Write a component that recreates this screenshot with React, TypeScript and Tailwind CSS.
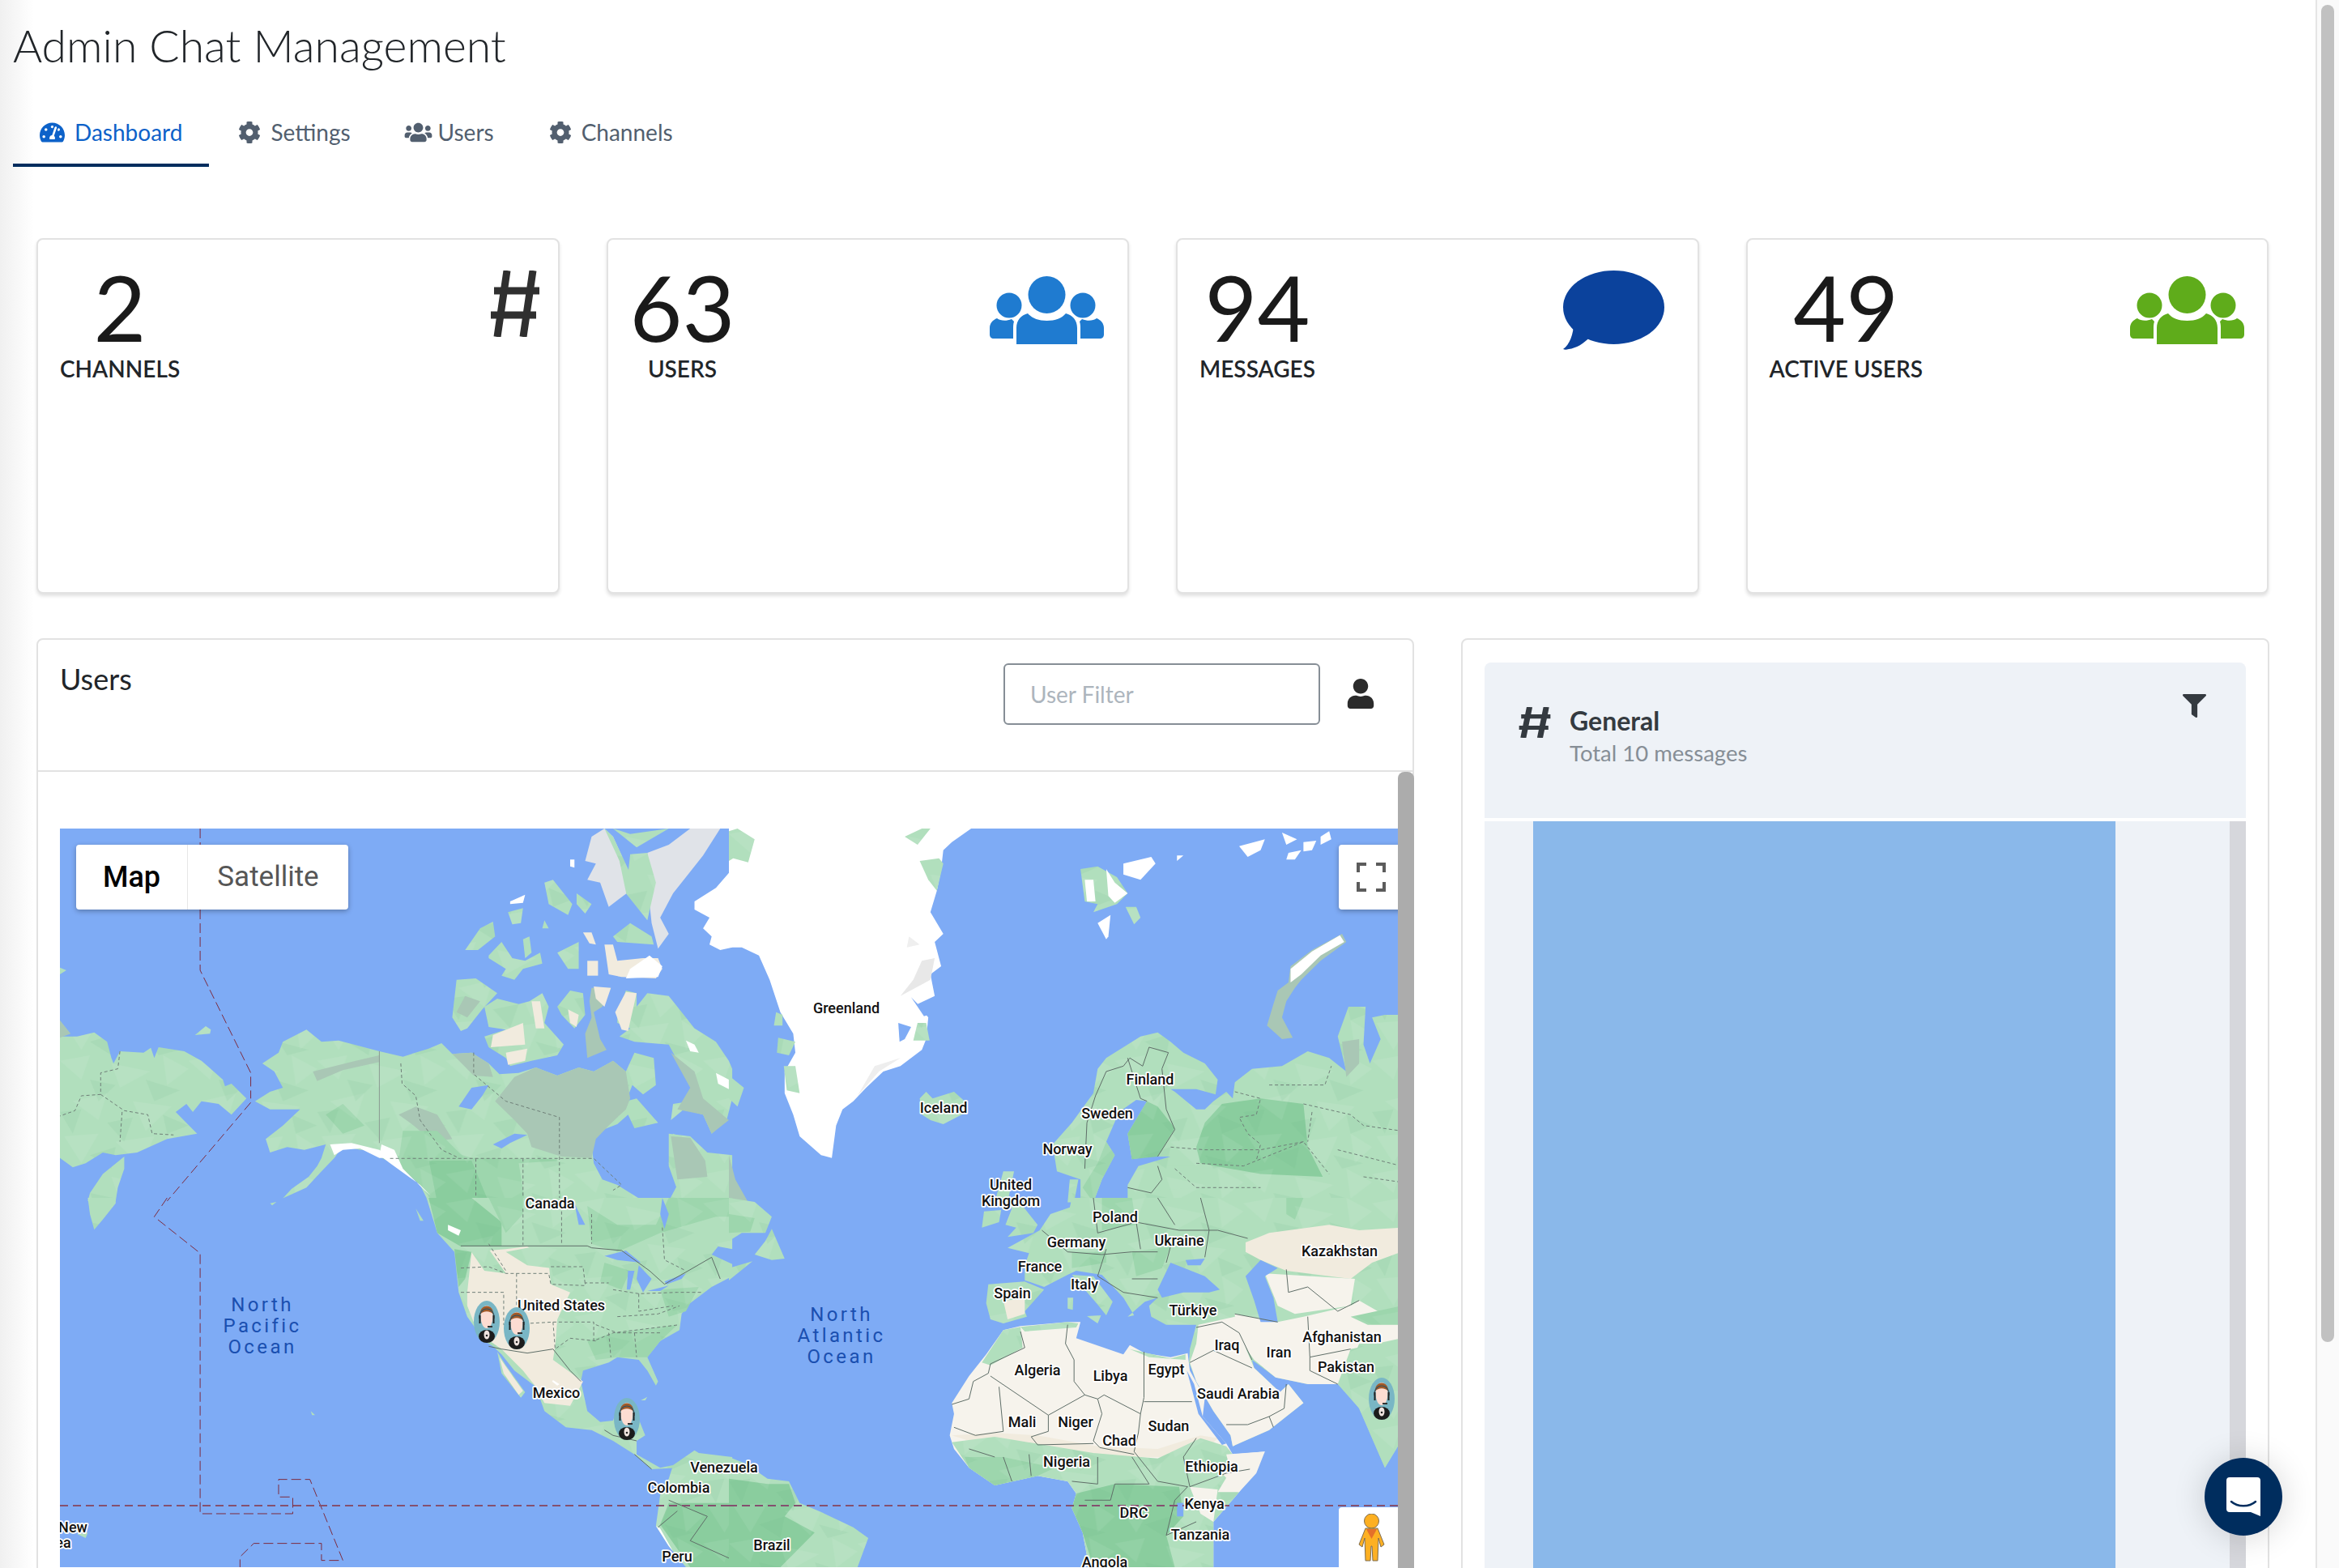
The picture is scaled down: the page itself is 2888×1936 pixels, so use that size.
import { Fragment } from 'react';
import { FaTachometerAlt, FaCog, FaUsers, FaUser, FaFilter } from 'react-icons/fa';

const LAND = '#b1dfbd';
const FOREST = '#8acd9e';
const MID = '#9dd6ad';
const TUNDRA = '#a9c7b5';
const SAND = '#f1ebde';
const DESERT = '#f6f3ec';
const SNOW = '#ffffff';
const ICE = '#e0e3e8';

// each map quadrant is traced in its own coordinates, then scaled down
const northWest: [string, string][] = [
  [LAND, '0,770 40,770 80,755 110,790 120,850 125,870 140,825 195,830 212,812 220,850 230,810 290,825 330,860 380,930 385,955 400,945 435,1000 400,1060 370,1020 330,1010 310,1050 295,1020 270,1050 320,1130 250,1150 180,1200 130,1210 100,1200 60,1240 30,1255 0,1220'],
  [LAND, '150,1215 100,1280 70,1350 65,1380 130,1380 135,1330 150,1260'],
  [LAND, '315,765 340,732 352,745 350,760'],
  [LAND, '0,515 15,525 0,540'],
  [TUNDRA, '0,710 25,760 0,775'],
  [LAND, '472,870 510,830 520,790 575,745 610,790 650,785 745,825 800,845 860,815 890,795 915,835 960,830 1000,870 1025,910 1070,905 1110,885 1160,915 1210,885 1245,900 1290,860 1320,900 1340,830 1385,850 1390,950 1360,985 1335,950 1320,1010 1345,1000 1395,1090 1340,1110 1325,1060 1300,1095 1260,1120 1240,1170 1245,1240 1265,1300 1300,1320 1350,1370 1420,1380 1440,1320 1420,1240 1430,1130 1480,1170 1520,1220 1568,1270 1568,1385 860,1385 840,1320 800,1260 770,1220 740,1190 700,1190 660,1175 640,1220 610,1270 575,1330 520,1370 540,1335 580,1290 600,1250 610,1220 620,1170 570,1190 530,1180 490,1200 480,1150 520,1100 560,1040 490,1040 455,1010 490,975 520,960 500,900'],
  [TUNDRA, '1015,1010 1060,920 1110,885 1160,915 1210,885 1245,900 1290,860 1320,900 1330,1000 1320,1040 1280,1100 1250,1150 1240,1220 1170,1215 1100,1180 1090,1130 1060,1080'],
  [TUNDRA, '790,1060 830,1030 880,1060 915,1150 870,1160 825,1100'],
  [TUNDRA, '590,900 690,860 745,840 745,865 660,895 600,935'],
  [TUNDRA, '915,835 960,830 1000,870 1010,920 965,915'],
  [MID, '750,1220 900,1190 960,1220 1160,1225 1170,1385 870,1385 840,1320 790,1250'],
  [FOREST, '860,1225 960,1230 1000,1385 880,1385'],
  [MID, '800,1120 880,1120 950,1230 790,1230'],
  [LAND, '1070,1240 1170,1230 1165,1385 1085,1385'],
  [MID, '620,1060 660,1020 710,1100 660,1130'],
  [SNOW, '630,1170 680,1165 745,1190 770,1220 745,1220 700,1185 660,1190 640,1210'],
  [SNOW, '750,1170 780,1190 800,1260 850,1340 865,1360 840,1320 770,1240 745,1210'],
  ['#7eabf5', '1010,1170 1060,1130 1090,1135 1050,1165 1030,1185'],
  ['#7eabf5', '930,1030 960,960 1000,950 985,990 960,1040'],
  [LAND, '925,560 970,555 1020,610 985,670 950,740 935,750 915,700'],
  [TUNDRA, '945,620 980,640 950,700 925,680'],
  [LAND, '990,660 1020,630 1070,650 1095,640 1125,610 1140,660 1130,720 1175,800 1160,840 1100,860 1050,880 1040,850 1000,810 990,770 1040,745 1000,735'],
  [SAND, '1010,765 1080,720 1085,800 1005,810'],
  [SAND, '1040,830 1090,815 1085,860 1045,875'],
  [SAND, '1100,640 1120,640 1130,740 1110,740'],
  [LAND, '1160,660 1190,600 1220,610 1225,690 1200,740 1170,690'],
  [SAND, '1185,670 1210,690 1205,735 1190,720'],
  [TUNDRA, '1240,590 1285,590 1265,660 1245,680 1260,780 1275,820 1230,850 1225,760 1240,700 1235,640'],
  [SAND, '1245,585 1285,590 1270,660 1250,630'],
  [LAND, '1300,690 1320,600 1345,610 1345,660 1370,610 1420,620 1440,660 1480,740 1530,790 1560,860 1568,890 1568,1000 1555,1080 1520,1130 1500,1060 1455,1040 1425,1080 1430,1020 1470,1010 1490,990 1470,920 1440,860 1420,800 1340,790 1305,770 1330,740 1300,720'],
  [SAND, '1295,680 1320,605 1345,610 1325,750 1310,745'],
  [TUNDRA, '1425,830 1480,900 1500,1000 1560,1080 1520,1130 1500,1060 1440,1040 1470,960'],
  [LAND, '1420,1130 1470,1140 1510,1200 1568,1210 1568,1385 1500,1385 1440,1340 1420,1250'],
  [TUNDRA, '1425,1140 1470,1145 1505,1230 1510,1290 1440,1300'],
  [ICE, '1240,30 1270,0 1290,30 1310,100 1330,230 1280,290 1260,200 1230,190 1250,130 1225,120'],
  [LAND, '1270,0 1290,30 1340,200 1320,235 1305,120'],
  [ICE, '1370,90 1420,60 1470,0 1540,0 1500,100 1460,180 1430,240 1400,330 1420,390 1395,445 1380,350 1370,200'],
  [LAND, '1290,0 1345,70 1420,0 1330,20'],
  [LAND, '1330,95 1370,90 1390,200 1370,340 1320,240'],
  [LAND, '1130,200 1150,190 1195,280 1185,320 1140,280'],
  [LAND, '1205,240 1240,280 1225,315 1205,280'],
  [SNOW, '1050,270 1085,245 1080,275 1050,280'],
  [LAND, '1045,310 1080,295 1075,350 1055,355'],
  [LAND, '945,450 980,370 1010,345 1015,400 975,450'],
  [LAND, '1000,470 1030,420 1055,480 1085,490 1120,460 1125,500 1080,520 1060,560 1030,545 1040,520 1000,480'],
  [LAND, '1080,410 1095,400 1100,460 1085,480'],
  [LAND, '1160,460 1210,420 1210,520 1185,520'],
  [SAND, '1230,490 1255,490 1255,545 1230,545'],
  [SAND, '1270,430 1290,430 1300,490 1360,480 1395,480 1405,520 1390,555 1310,550 1280,540'],
  [SNOW, '1330,520 1375,470 1405,510 1395,550 1320,555'],
  [SAND, '1220,385 1240,385 1250,430 1235,425'],
  [LAND, '1290,400 1330,350 1380,400 1385,430 1300,420'],
  [LAND, '1130,340 1140,370 1125,370'],
  [SNOW, '1568,150 1530,220 1480,270 1480,300 1515,330 1500,370 1520,400 1515,430 1540,450 1568,440'],
  [SNOW, '1190,115 1200,115 1200,145 1190,140'],
  [SNOW, '1460,785 1480,800 1490,830 1470,825'],
  [SNOW, '1530,905 1560,930 1560,965 1535,945'],
];

const northEast: [string, string][] = [
  [SNOW, '0,0 400,0 565,0 520,50 500,80 495,150 485,230 470,310 500,390 480,420 495,510 470,540 480,620 440,650 465,700 460,780 450,820 400,880 360,900 320,960 290,1010 265,1040 250,1100 240,1220 215,1210 165,1140 150,1060 130,980 130,900 155,830 150,760 120,680 95,560 70,470 30,440 0,440'],
  [LAND, '0,10 20,0 60,40 45,125 10,110 0,120'],
  [LAND, '410,30 450,0 470,0 440,60'],
  [LAND, '445,120 490,110 500,130 485,230 465,190'],
  [LAND, '440,720 460,720 468,785 430,785'],
  [LAND, '128,880 155,880 165,980 135,970'],
  ['#7eabf5', '395,720 425,735 410,780 398,790'],
  ['#7eabf5', '425,625 465,690 455,695'],
  [LAND, '110,680 125,690 125,730 105,730'],
  [LAND, '115,775 155,790 140,840 112,830'],
  [LAND, '0,915 35,960 20,1030 0,1000'],
  ['#efefef', '420,400 445,430 415,440'],
  ['#e8e8e8', '450,490 480,480 470,560 400,620 430,560'],
  ['#eeeeee', '340,880 400,850 350,900 300,990'],
  [LAND, '445,1000 460,975 475,1000 525,975 550,1010 555,1050 500,1095 470,1080 450,1060'],
  [LAND, '820,150 860,140 905,180 930,240 905,280 850,310 860,280 830,270'],
  [SNOW, '880,150 900,200 930,240 900,275 885,250'],
  [SNOW, '830,190 850,190 855,270 835,270'],
  [SNOW, '920,130 985,105 995,130 960,190 920,170'],
  [SNOW, '860,350 890,320 885,400 880,410'],
  [LAND, '925,290 950,290 960,330 945,355'],
  [SNOW, '1190,65 1250,40 1240,80 1210,105'],
  [SNOW, '1290,15 1325,40 1300,60'],
  [SNOW, '1340,50 1370,45 1360,80 1340,85'],
  [SNOW, '1380,30 1400,10 1405,40 1380,60'],
  [SNOW, '1305,90 1335,80 1320,115 1300,115'],
  [SNOW, '1045,100 1060,100 1045,120'],
  [TUNDRA, '1430,390 1440,420 1380,490 1335,560 1320,590 1300,640 1290,700 1315,775 1290,780 1255,730 1270,650 1280,600 1305,570 1310,510 1360,450'],
  [SNOW, '1425,395 1435,420 1380,470 1335,540 1310,570 1310,520 1360,455'],
  [LAND, '860,890 880,850 920,810 960,770 1000,755 1030,790 1060,830 1110,870 1140,930 1135,985 1090,965 1030,965 1040,975 1090,1040 1110,1040 1130,1010 1160,975 1175,1000 1180,940 1220,890 1290,880 1350,825 1400,850 1440,900 1420,770 1445,660 1485,660 1480,800 1495,870 1520,780 1500,700 1530,690 1568,690 1568,1385 930,1385 930,1320 955,1250 1030,1215 980,1215 940,1225 930,1130 975,1010 950,1005 910,1050 880,1160 900,1210 870,1300 850,1385 820,1385 820,1300 765,1270 755,1170 800,1090 850,980'],
  [FOREST, '930,1130 975,1010 1000,1030 1040,1110 1000,1215 940,1225'],
  [FOREST, '1090,1180 1110,1090 1150,1020 1240,1000 1340,1020 1350,1180 1385,1290 1240,1280 1100,1240'],
  [MID, '880,1160 900,1210 870,1300 850,1385 825,1330 860,1240'],
  [TUNDRA, '1430,790 1470,780 1470,870 1440,920'],
  [LAND, '1000,1250 1090,1250 1110,1330 990,1340'],
  [LAND, '640,1270 665,1270 650,1385 620,1385'],
  [LAND, '795,1300 815,1300 805,1385 790,1385'],
  [TUNDRA, '0,1210 15,1300 45,1385 0,1385'],
];

const southWest: [string, string][] = [
  [LAND, '65,0 130,0 130,20 100,80 80,118 70,60'],
  [LAND, '490,20 505,15 495,28'],
  [LAND, '855,0 1568,0 1568,190 1535,180 1520,210 1568,245 1568,290 1520,330 1495,360 1470,390 1450,430 1445,490 1400,530 1370,590 1395,680 1390,695 1370,640 1350,600 1300,590 1280,610 1220,640 1215,680 1230,790 1260,830 1290,825 1300,780 1340,780 1365,880 1345,900 1345,950 1400,1000 1430,990 1440,1000 1380,1005 1340,950 1290,900 1240,860 1180,850 1130,790 1110,700 1060,640 1030,580 1010,550 990,530 950,440 930,350 920,200 880,130'],
  [LAND, '1020,570 1040,620 1085,720 1075,740 1030,650'],
  [SAND, '1025,590 1040,625 1080,715 1070,730 1035,650'],
  [SAND, '950,350 960,200 1040,190 1090,180 1140,240 1145,320 1190,350 1160,450 1155,550 1150,600 1220,680 1190,770 1130,760 1110,700 1080,640 1030,560 975,500 950,400'],
  [LAND, '1040,200 1090,185 1140,180 1145,260 1090,250'],
  [LAND, '955,190 1000,190 1040,280 990,270'],
  [MID, '1230,530 1290,500 1440,470 1400,530 1370,590 1300,590 1250,600'],
  [MID, '1240,170 1300,200 1400,130 1530,70 1568,70 1568,0 1420,0 1390,100 1300,100 1230,30'],
  [FOREST, '860,0 960,0 1030,90 1030,180 935,180 880,130'],
  [MID, '1000,0 1080,0 1080,60 1040,130'],
  [FOREST, '920,190 960,200 945,300 930,330'],
  [MID, '1400,340 1490,330 1460,420 1420,440'],
  [MID, '1270,240 1330,270 1310,340 1260,310'],
  [SNOW, '905,100 935,120 930,140 905,120'],
  [SNOW, '1150,675 1165,690 1160,695 1148,680'],
  ['#7eabf5', '1270,215 1320,195 1355,240 1300,230'],
  ['#7eabf5', '1325,270 1340,270 1330,340 1322,340'],
  ['#7eabf5', '1350,250 1380,300 1360,350 1345,300'],
  ['#7eabf5', '1370,345 1420,325 1400,345'],
  ['#7eabf5', '1410,310 1460,280 1450,300 1415,320'],
  ['#7eabf5', '1200,20 1225,100 1210,100'],
  ['#7eabf5', '1405,0 1420,60 1410,115 1400,60'],
  [LAND, '830,40 848,85 840,85'],
  [LAND, '1355,750 1370,737 1365,750'],
  [LAND, '585,790 595,805 588,805'],
  [LAND, '1568,960 1490,945 1480,935 1430,990 1420,1040 1400,1100 1390,1215 1420,1290 1460,1368 1568,1368'],
  [FOREST, '1420,1130 1568,1130 1568,1368 1470,1368 1400,1210'],
  [SNOW, '1390,1215 1400,1225 1430,1310 1420,1290'],
  [LAND, '40,1245 65,1240 60,1260'],
];

const southEast: [string, string][] = [
  [LAND, '0,0 60,15 100,70 85,130 30,130 0,160'],
  [MID, '0,60 60,75 50,125 0,130'],
  [LAND, '100,115 130,225 100,230 60,210 85,160'],
  [LAND, '0,260 55,235 20,280 0,305'],
  [LAND, '0,960 40,985 90,1040 140,1050 165,1130 210,1160 290,1220 325,1260 300,1368 0,1368'],
  [FOREST, '0,1040 90,1060 140,1060 155,1130 130,1180 200,1240 120,1368 0,1368'],
  [LAND, '640,0 665,0 690,40 720,100 710,130 650,145 670,110 645,100 660,40'],
  [LAND, '595,50 635,45 630,90 590,110'],
  [LAND, '605,320 690,310 735,340 690,420 695,440 640,465 610,450 600,390'],
  [SAND, '640,380 690,375 690,430 650,450'],
  [LAND, '800,0 795,35 750,60 725,120 650,185 700,205 690,250 690,305 735,330 790,285 810,270 870,285 920,370 945,435 930,440 970,385 1000,370 980,400 985,440 1020,470 1090,470 1075,560 1073,610 1090,680 1130,790 1170,880 1175,920 1260,860 1340,760 1305,690 1285,720 1225,630 1220,600 1275,665 1350,690 1420,690 1470,780 1530,1000 1568,900 1568,0'],
  [LAND, '800,285 850,290 895,385 880,435 860,395 830,340'],
  [LAND, '790,370 803,370 802,415 790,410'],
  [LAND, '835,438 868,435 860,465'],
  [MID, '800,200 880,200 880,240 800,260'],
  [MID, '940,200 1030,180 1010,260 950,290'],
  [MID, '870,0 940,0 950,100 870,120'],
  [MID, '1300,0 1340,0 1320,80 1300,60'],
  [SAND, '1205,165 1260,130 1400,100 1470,120 1568,110 1568,200 1500,240 1450,300 1300,270 1240,230 1205,200'],
  [DESERT, '1180,430 1280,460 1340,440 1450,400 1470,380 1568,470 1568,520 1450,560 1420,690 1350,690 1275,665 1225,600 1180,500'],
  [DESERT, '1250,280 1460,300 1450,400 1320,430 1280,400'],
  [DESERT, '1095,470 1180,440 1190,500 1225,630 1285,720 1305,690 1340,760 1260,860 1175,920 1170,880 1130,790 1090,680 1075,610 1090,540'],
  [MID, '1450,440 1568,400 1568,470 1490,470'],
  [LAND, '1470,540 1568,540 1568,900 1530,1000 1470,780 1430,690'],
  ['#7eabf5', '1000,340 1030,240 1110,290 1145,340 1120,350 1060,350 1010,370'],
  ['#7eabf5', '1065,230 1110,225 1100,250 1070,250'],
  ['#7eabf5', '1205,290 1240,230 1280,260 1250,290 1270,370 1280,460 1240,460 1225,380'],
  [DESERT, '640,490 680,475 790,460 820,460 810,520 920,580 935,545 970,575 1030,590 1070,575 1075,640 1110,740 1105,810 1160,910 1175,950 1250,940 1230,1020 1190,1090 1130,1200 1130,1368 840,1368 825,1240 800,1150 810,1095 790,1050 720,1030 620,1065 560,1000 525,930 515,880 525,800 520,760 560,660 600,580'],
  [LAND, '640,490 680,478 685,555 610,620 590,610'],
  [LAND, '680,478 790,460 815,465 810,480 690,495'],
  [LAND, '935,560 1030,595 1065,580 1065,600 980,590'],
  [SAND, '520,880 620,870 720,880 860,920 1000,930 1100,880 1140,890 1100,960 900,960 600,920'],
  [LAND, '520,905 620,885 850,945 1000,965 1100,890 1160,920 1175,950 1150,1020 1190,1090 1130,1200 1130,1368 840,1368 825,1240 800,1150 810,1095 790,1050 720,1030 620,1065 560,1000'],
  [FOREST, '810,1095 900,1060 1050,1070 1060,1180 1020,1250 1040,1368 850,1368 825,1240 800,1150'],
  [MID, '550,960 640,960 760,1000 720,1030 620,1065 560,1000'],
  [DESERT, '1160,950 1250,940 1190,1090 1140,1090 1170,1010'],
  [DESERT, '1075,1070 1140,1080 1130,1200 1100,1170'],
  ['#7eabf5', '1045,1130 1060,1130 1060,1180 1045,1180'],
  ['#7eabf5', '1068,640 1085,690 1105,810 1160,910 1150,915 1095,800 1075,680'],
];

const solidLines = [
  'M680,495 690,555 610,615 605,650 570,680 560,745 520,765',
  'M790,470 785,540 805,600 805,680 830,730 745,805 610,660',
  'M830,730 860,745 875,730 960,800 968,740 968,570',
  'M860,745 870,800 850,900 865,925 945,950',
  'M968,755 1080,755',
  'M960,800 955,870 945,940 1000,1050',
  'M630,700 640,865 575,880 525,850',
  'M745,805 745,865 705,885 720,915 850,910',
  'M1000,1050 1070,1070 1040,1120 1020,1250 1090,1200',
  'M940,960 980,1060 900,1060 890,1120 830,1120',
  'M860,960 860,1060 800,1050',
  'M640,960 660,1050 M700,950 705,1030 M560,930 620,960',
  'M1090,890 1060,960 1075,1070 1160,1020 1215,1005',
  'M1090,480 1150,460 1190,500 1220,600 M1075,610 1130,565 1220,630',
  'M1160,840 1210,840 1260,810 1270,850 M1300,690 1295,780 1260,810',
  'M1300,265 1305,350 1350,330 1420,420 1470,380 M1450,560 1355,590 1355,640 1420,690',
  'M1180,430 1280,460 M1350,440 1355,590',
  'M850,0 860,130 950,90 1050,120 1140,120 1210,150 M730,120 790,200 870,210 940,200 1000,200',
  'M880,190 860,290 920,350 1000,370 M1030,180 1020,240 M950,90 960,190',
  'M940,300 1000,300 M1100,0 1120,120 1110,220 M1000,0 1040,100',
];

const usLines = [
  'M935,178 1230,178 1240,185 1310,195 1375,270 1410,320 1460,275 1520,220 1540,300',
  'M1000,550 1030,560 1090,575 1150,560 1190,640 1215,680',
  'M1345,900 1290,880 1270,860 M1380,1005 1340,950 M1420,1120 1510,1180 1470,1270 1568,1340 M1395,1220 1440,1160',
];

const stateLines = [
  'M1080,40 1080,175 M1170,50 1170,175 M1240,60 1240,170 M1405,110 1410,230 1460,270',
  'M1000,170 1040,270 M935,260 1000,255 1040,280 1140,280 1145,320 1225,325 1225,315 1280,315',
  'M935,350 1035,350 1035,470 1150,460 1245,460 1245,530 1290,500 1445,470',
  'M1065,280 1065,400 M1145,255 1220,255 1225,320 M1150,460 1155,560 1190,520 1250,530',
  'M1290,340 1350,355 1440,350 1500,350 M1350,355 1350,420 1430,400 M1300,440 1395,430 1445,400',
  'M1250,470 1300,500 1400,500 M1280,500 1285,590 M1340,500 1345,590',
];

const ruLines = [
  'M1260,950 1390,950 1405,880 M1180,975 1240,1000 1230,1060 1190,1070 1210,1130 1240,1170 1230,1230',
  'M1340,1020 1450,1060 1480,1100 1568,1120 M1340,1160 1240,1190 1110,1190 1030,1180',
  'M1090,1240 1200,1250 1340,1160 1400,1280 M1040,1260 1090,1330 1240,1330',
  'M1360,1050 1350,1160 M1420,1190 1568,1250 M1480,1290 1568,1310',
];

const ruSolid = ['M880,900 920,880 935,850 965,880 980,810 1025,830 1010,890 1020,1040 1040,1115 1000,1215', 'M880,900 855,990 835,1090 830,1260', 'M930,850 960,1000 975,1010', 'M930,1330 985,1350 1010,1300 1000,1250'];

const westRegion = [
  'M140,825 135,890 95,905 95,985 50,990 35,1045 0,1065',
  'M95,985 150,1045 205,1060 215,1130 265,1135 M145,1050 140,1160',
  'M965,830 965,910 1040,1010 1165,1070 1165,1220 1165,1380',
  'M795,870 798,945 830,990 840,1080 890,1190 930,1220',
  'M770,1222 1245,1222 1310,1320 1290,1340 M970,1222 970,1380 M1080,1222 1080,1380',
];

const greyLines = ['M745,825 745,1165'];

const labels: [string, number, number][] = [
  ['Greenland', 971, 228], ['Iceland', 1091, 351], ['Finland', 1346, 316], ['Sweden', 1293, 358], ['Norway', 1244, 402],
  ['United', 1174, 446], ['Kingdom', 1174, 466], ['Poland', 1303, 486], ['Germany', 1255, 517], ['Ukraine', 1382, 515],
  ['Kazakhstan', 1580, 528], ['France', 1210, 547], ['Italy', 1265, 569], ['Spain', 1176, 580], ['Türkiye', 1399, 601],
  ['Iraq', 1441, 644], ['Iran', 1505, 653], ['Afghanistan', 1583, 634], ['Pakistan', 1588, 671], ['Algeria', 1207, 675],
  ['Libya', 1297, 682], ['Egypt', 1366, 674], ['Saudi Arabia', 1455, 704], ['Mali', 1188, 739], ['Niger', 1254, 739],
  ['Sudan', 1369, 744], ['Chad', 1308, 762], ['Nigeria', 1243, 788], ['Ethiopia', 1422, 794], ['Kenya', 1413, 840],
  ['DRC', 1326, 851], ['Tanzania', 1408, 878], ['Angola', 1290, 912], ['Brazil', 879, 891], ['Venezuela', 820, 795],
  ['Colombia', 764, 820], ['Peru', 762, 905], ['Mexico', 613, 703], ['United States', 619, 595], ['Canada', 605, 469],
  ['New', 16, 869], ['ea', 4, 888],
];

const oceans: [string, number, number][] = [
  ['North', 250, 596], ['Pacific', 250, 622], ['Ocean', 250, 648],
  ['North', 965, 608], ['Atlantic', 965, 634], ['Ocean', 965, 660],
];

// blotchy shading that sits on top of the green land fills
const lightBlotches = ['0,20 70,0 50,90', '120,30 210,60 140,120', '240,0 300,50 250,110', '30,170 110,140 90,240', '170,170 260,190 200,280', '10,300 90,290 50,400', '130,320 220,300 190,410', '250,290 300,340 260,400'];
const darkBlotches = ['70,90 130,110 90,170', '200,90 280,130 220,170', '0,210 50,200 30,290', '110,250 170,230 150,320', '240,220 300,260 250,290', '70,370 130,340 120,420', '210,370 280,400 230,420'];

function Quadrant({ x, y, shapes, children }: { x: number; y: number; shapes: [string, string][]; children?: React.ReactNode }) {
  return (
    <g transform={`translate(${x} ${y}) scale(0.5294 0.3333)`}>
      {shapes.map(([fill, points], i) => (
        <Fragment key={i}>
          <polygon fill={fill} points={points} />
          {(fill === LAND || fill === MID || fill === FOREST) && <polygon fill="url(#mottle)" points={points} />}
        </Fragment>
      ))}
      {children}
    </g>
  );
}

function Lines({ d, stroke, width = 1, dash }: { d: string[]; stroke: string; width?: number; dash?: string }) {
  return (
    <>
      {d.map((line, i) => (
        <path key={i} d={line} fill="none" stroke={stroke} strokeWidth={width} strokeDasharray={dash} vectorEffect="non-scaling-stroke" />
      ))}
    </>
  );
}

function Pin({ x, y }: { x: number; y: number }) {
  return (
    <g transform={`translate(${x - 16} ${y - 26})`}>
      <ellipse cx="16" cy="26" rx="16" ry="26" fill="#79b6c5" />
      <ellipse cx="16" cy="20" rx="7.5" ry="14" fill="#fcdcd2" />
      <path d="M8 17 C7 3 25 3 24 17 C21 12 11 12 8 17 Z" fill="#a25a28" />
      <path d="M7 22 C6 6 26 6 25 22" fill="none" stroke="#35505c" strokeWidth="1.2" />
      <rect x="6.5" y="18" width="2" height="10" fill="#222" />
      <rect x="23.5" y="18" width="2" height="10" fill="#222" />
      <rect x="17" y="31" width="6" height="2" fill="#333" />
      <ellipse cx="16" cy="44" rx="10" ry="8" fill="#1c1c1c" />
      <ellipse cx="16" cy="42" rx="3.5" ry="5.5" fill="#f0e4e0" />
      <circle cx="16" cy="43" r="1.3" fill="#222" />
    </g>
  );
}

function WorldMap() {
  return (
    <svg viewBox="0 0 1652 912" className="block h-full w-full bg-[#7eabf5]">
      <defs>
        <pattern id="mottle" patternUnits="userSpaceOnUse" width="300" height="420">
          {lightBlotches.map((p, i) => (
            <polygon key={i} points={p} fill="#ffffff" fillOpacity="0.07" />
          ))}
          {darkBlotches.map((p, i) => (
            <polygon key={i} points={p} fill="#5fb57f" fillOpacity="0.1" />
          ))}
        </pattern>
      </defs>
      <Quadrant x={0} y={0} shapes={northWest}>
        <Lines d={westRegion} stroke="#6f7f78" dash="4 3" />
        <Lines d={greyLines} stroke="#8a9a92" />
        <Lines d={['M327,0 327,60', 'M327,300 327,525 445,905 445,1000', 'M445,1015 250,1380']} stroke="#7d2b3f" dash="12 5" />
      </Quadrant>
      <Quadrant x={826} y={0} shapes={northEast}>
        <Lines d={ruLines} stroke="#6f7f78" dash="4 3" />
        <Lines d={ruSolid} stroke="#5f6e68" />
      </Quadrant>
      <Quadrant x={0} y={456} shapes={southWest}>
        <Lines d={stateLines} stroke="#6f7f78" dash="4 3" />
        <Lines d={usLines} stroke="#5f6e68" />
        <Lines d={['M250,0 220,70 327,205 327,1170 543,1170 543,1108 510,1108 510,1043 583,1043 660,1343 610,1343 610,1280 452,1280 420,1330 420,1368']} stroke="#7d2b3f" dash="12 5" />
        <Lines d={['M0,1140 1568,1140']} stroke="#84506f" width={2} dash="10 6" />
      </Quadrant>
      <Quadrant x={826} y={456} shapes={southEast}>
        <Lines d={solidLines} stroke="#5f6e68" />
        <Lines d={['M0,1140 1568,1140']} stroke="#84506f" width={2} dash="10 6" />
      </Quadrant>
      <g fontFamily="Roboto, sans-serif" fontSize="18" fontWeight="500" textAnchor="middle" fill="#111" stroke="#ffffff" strokeWidth="3.5" strokeLinejoin="round" paintOrder="stroke">
        {labels.map(([name, x, y], i) => (
          <text key={i} x={x} y={y}>{name}</text>
        ))}
      </g>
      <g fontFamily="Roboto, sans-serif" fontSize="24" textAnchor="middle" fill="#1a4fb0" letterSpacing="3.4">
        {oceans.map(([name, x, y], i) => (
          <text key={i} x={x} y={y}>{name}</text>
        ))}
      </g>
      <Pin x={527} y={609} />
      <Pin x={564} y={617} />
      <Pin x={700} y={729} />
      <Pin x={1632} y={704} />
    </svg>
  );
}

function Hash({ className, weight = 9 }: { className: string; weight?: number }) {
  return (
    <svg viewBox="0 0 62 82" preserveAspectRatio="none" className={className} fill="none" stroke="currentColor" strokeWidth={weight}>
      <path d="M21 0 L9 82 M53 0 L41 82 M5 25 H61 M1 55 H57" />
    </svg>
  );
}

function PeopleIcon({ className }: { className: string }) {
  return (
    <svg viewBox="0 0 141 84" className={className} fill="currentColor">
      <circle cx="70.5" cy="23" r="23" />
      <circle cx="24" cy="36" r="15.5" />
      <circle cx="115" cy="36" r="15.5" />
      <path d="M33 84 V64 C33 54 39 48 47 46 C52 52 60 55 70.5 55 C81 55 89 52 94 46 C102 48 108 54 108 64 V84 Z" />
      <path d="M0 72 V64 C0 58 4 54 9 52 C13 55 20 56 27 53 C29 55 30 56 30 56 C29 59 29 62 29 65 V77 H5 C2 77 0 75 0 72 Z" />
      <path d="M141 72 V64 C141 58 137 54 132 52 C128 55 121 56 114 53 C112 55 111 56 111 56 C112 59 112 62 112 65 V77 H136 C139 77 141 75 141 72 Z" />
    </svg>
  );
}

function BubbleIcon({ className }: { className: string }) {
  return (
    <svg viewBox="0 0 125 98" className={className} fill="currentColor">
      <ellipse cx="62.5" cy="45.5" rx="62.5" ry="45.5" />
      <path d="M13 65 C13 78 8 92 0 97 C2 98 4 98 7 97 C16 96 26 90 33 82 Z" />
    </svg>
  );
}

function Pegman({ className }: { className: string }) {
  return (
    <svg viewBox="0 0 33 59" className={className}>
      <g fill="#fdb022" stroke="#7d6c50" strokeWidth="1">
        <ellipse cx="16.5" cy="9" rx="9" ry="9" />
        <path d="M9 18 H24 L32 38 L28 41 L25 30 L24 58 H18 L17 40 H16 L15 58 H9 L8 30 L5 41 L1 38 Z" />
      </g>
      <path d="M10 19 H23 L16.5 31 Z" fill="#e4702a" />
    </svg>
  );
}

const tabs = [
  { label: 'Dashboard', icon: <FaTachometerAlt className="h-[29px] w-[31px]" />, active: true },
  { label: 'Settings', icon: <FaCog className="ml-[3px] h-[29px] w-[28px]" /> },
  { label: 'Users', icon: <FaUsers className="-mr-[5px] h-[27px] w-[35px]" /> },
  { label: 'Channels', icon: <FaCog className="ml-[2px] h-[29px] w-[28px]" /> },
];

const stats = [
  { value: '2', label: 'CHANNELS', icon: <Hash className="mr-[22px] mt-[38px] h-[82px] w-[62px] text-[#2f2f2f]" /> },
  { value: '63', label: 'USERS', icon: <PeopleIcon className="mr-[29px] mt-[45px] h-[84px] w-[141px] text-[#1f7bd0]" /> },
  { value: '94', label: 'MESSAGES', icon: <BubbleIcon className="mr-[41px] mt-[38px] h-[98px] w-[125px] text-[#0b429c]" /> },
  { value: '49', label: 'ACTIVE USERS', icon: <PeopleIcon className="mr-[28px] mt-[45px] h-[84px] w-[141px] text-[#5fac1b]" /> },
];

export default function App() {
  return (
    <div className="relative flex h-[1936px] w-[2888px] overflow-hidden bg-white [font-family:Lato,sans-serif]">
      <main className="w-[2859px] shrink-0 bg-[linear-gradient(90deg,#f0f0f0,#ffffff_42px)]">
        <div className="pl-4 pt-[22px]">
          <h1 className="text-[55.3px] font-light leading-[68px] text-[#212529]">Admin Chat Management</h1>
          <nav className="mt-[40px] flex">
            {tabs.map((t) => (
              <div
                key={t.label}
                className={`flex h-[76px] items-center gap-3 border-b-4 px-[33px] pb-[6px] text-[28px] ${t.active ? 'border-[#002d5e] text-[#0d62c9]' : 'border-transparent text-[#525f6f]'}`}
              >
                {t.icon}
                {t.label}
              </div>
            ))}
          </nav>
        </div>

        <section className="ml-[45px] mt-[88px] grid w-[2756px] grid-cols-4 gap-[58px]">
          {stats.map((s) => (
            <div key={s.label} className="flex h-[439px] items-start justify-between rounded-lg border-2 border-[#e2e2e2] bg-white shadow-[0_3px_4px_rgba(0,0,0,0.12)]">
              <div className="ml-[27px] mt-[27px] flex flex-col items-center">
                <span className="text-[112px] leading-[112px] text-[#1a1a1a]">{s.value}</span>
                <span className="mt-[6px] text-[28px] font-semibold leading-[28px] text-[#212529]">{s.label}</span>
              </div>
              {s.icon}
            </div>
          ))}
        </section>

        <section className="ml-[45px] mt-[55px] flex h-[1200px] w-[2757px] gap-[58px]">
          <div className="flex w-[1701px] flex-col rounded-lg border-2 border-[#e2e2e2] bg-white">
            <header className="flex h-[163px] shrink-0 items-start justify-between border-b-2 border-[#e2e2e2] pl-[27px] pr-[46px]">
              <h2 className="mt-[26px] text-[36px] leading-[44px] text-[#212529]">Users</h2>
              <div className="mt-[29px] flex items-start gap-8">
                <div className="flex h-[76px] w-[391px] items-center rounded-md border-2 border-[#868e96] px-[31px] text-[28px] text-[#adb5bd]">User Filter</div>
                <FaUser className="mt-[19px] h-[37px] w-[36px] text-[#2b2b2b]" />
              </div>
            </header>
            <div className="flex min-h-0 flex-1 pl-[27px]">
              <div className="flex-1 pt-[70px]">
                <div className="relative h-[912px] w-[1652px] overflow-hidden">
                  <WorldMap />
                  <div className="absolute left-5 top-5 flex h-20 w-[336px] rounded bg-white shadow-[0_2px_6px_rgba(0,0,0,0.3)] [font-family:Roboto,sans-serif]">
                    <div className="flex w-[138px] items-center justify-center border-r border-[#e6e6e6] text-[36px] font-medium text-black">Map</div>
                    <div className="flex flex-1 items-center justify-center text-[35px] text-[#565656]">Satellite</div>
                  </div>
                  <div className="absolute -right-[7px] top-5 flex h-20 w-20 items-center justify-center rounded-l bg-white shadow-[0_2px_6px_rgba(0,0,0,0.3)]">
                    <svg viewBox="0 0 36 36" className="h-9 w-9" fill="none" stroke="#5c5c5c" strokeWidth="4">
                      <path d="M2 12 V2 H12 M24 2 H34 V12 M2 24 V34 H12 M24 34 H34 V24" />
                    </svg>
                  </div>
                  <div className="absolute -right-[7px] bottom-0 flex h-[74px] w-20 items-center justify-center rounded-tl bg-white">
                    <Pegman className="h-[59px] w-[33px]" />
                  </div>
                </div>
              </div>
              <div className="w-5 shrink-0 rounded-t-lg bg-[#acacac]" />
            </div>
          </div>

          <div className="w-[998px] rounded-lg border-2 border-[#e2e2e2] bg-white px-[27px] pt-[28px]">
            <div className="flex h-[192px] items-start justify-between rounded-t-lg bg-[#eef2f7] pl-[42px] pr-[49px]">
              <div className="mt-[55px] flex gap-[23px]">
                <Hash weight={11} className="h-[38px] w-[40px] text-[#343a40]" />
                <div className="flex flex-col">
                  <span className="-mt-[2px] text-[32px] font-bold leading-[38px] text-[#343a40]">General</span>
                  <span className="text-[27.5px] leading-[42px] text-[#868e96]">Total 10 messages</span>
                </div>
              </div>
              <FaFilter className="mt-[39px] h-[29px] w-[29px] text-[#343a40]" />
            </div>
            <div className="mt-1 flex h-[1000px] justify-between bg-[#eef2f7] pl-[60px]">
              <div className="w-[719px] bg-[#8ab8ea]" />
              <div className="w-5 bg-[#d6d7dc]" />
            </div>
          </div>
        </section>
      </main>

      <aside className="flex-1 border-l-2 border-[#e5e5e5] bg-[#fafafa] pl-[5px] pt-[6px]">
        <div className="h-[1651px] w-4 rounded-full bg-[#c1c1c1]" />
      </aside>

      <div className="absolute left-[2722px] top-[1800px] flex h-24 w-24 items-center justify-center rounded-full bg-[#002d5e] shadow-[0_2px_40px_rgba(0,0,0,0.16)]">
        <svg viewBox="0 0 42 48" className="h-12 w-[42px]">
          <path d="M4 0 H38 Q42 0 42 4 V48 L30 43 H4 Q0 43 0 39 V4 Q0 0 4 0 Z" fill="#ffffff" />
          <path d="M6 30 C14 37 28 37 36 30" fill="none" stroke="#002d5e" strokeWidth="2.5" strokeLinecap="round" />
        </svg>
      </div>
    </div>
  );
}
